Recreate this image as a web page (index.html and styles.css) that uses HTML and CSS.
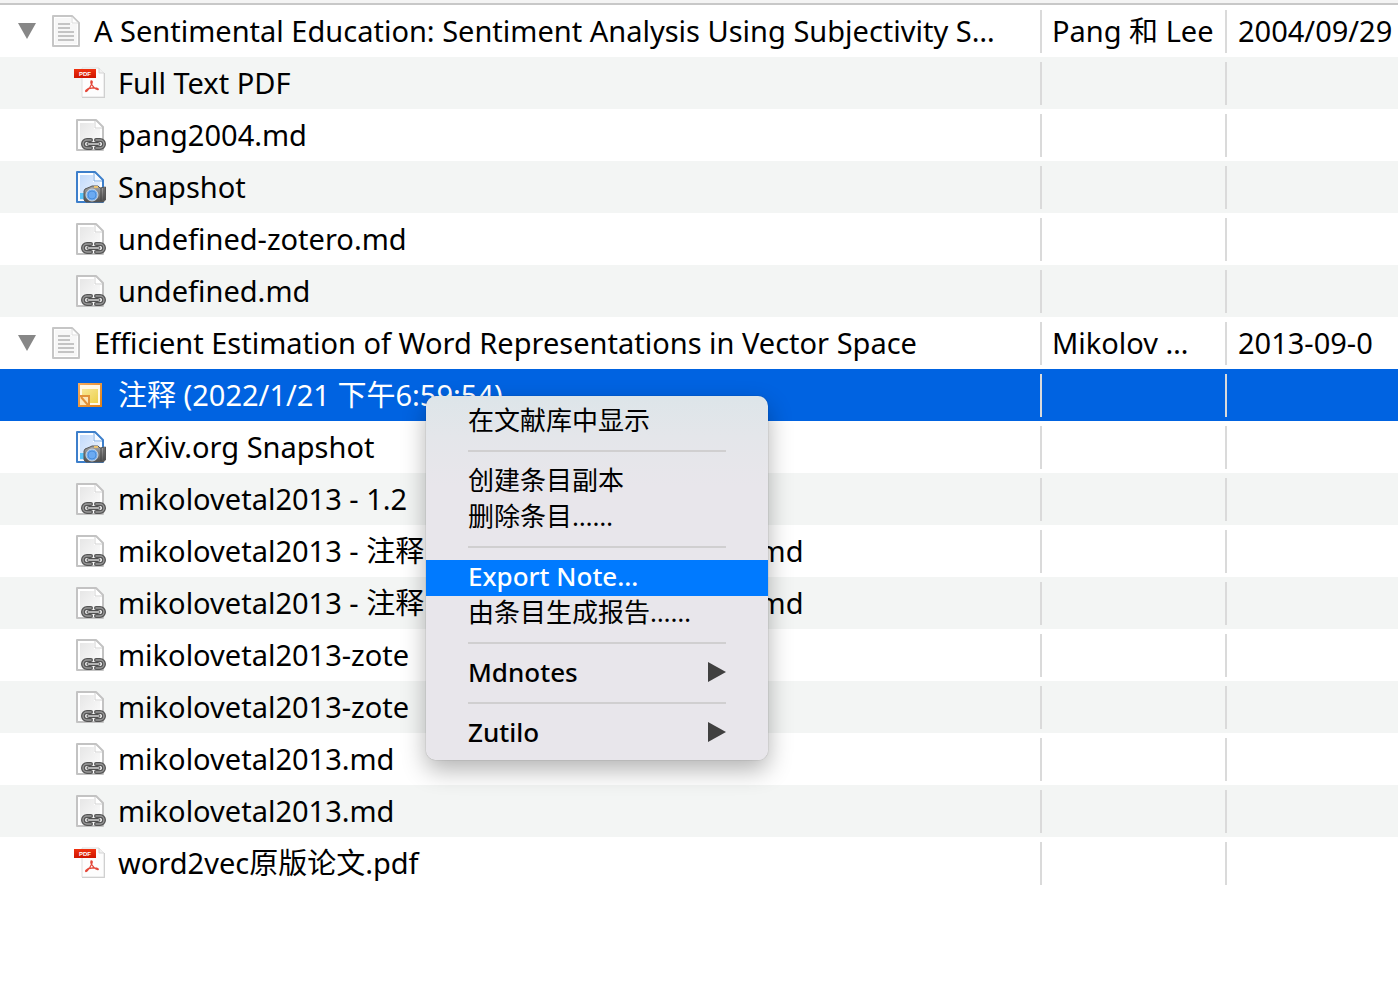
FILE: index.html
```html
<!DOCTYPE html>
<html lang="zh-CN">
<head>
<meta charset="utf-8">
<title>Zotero</title>
<link rel="stylesheet" href="styles.css">
</head>
<body>
<svg class="defs" aria-hidden="true">
  <defs>
    <linearGradient id="paper" x1="0" y1="0" x2="1" y2="1"><stop offset="0" stop-color="#e6e6e6"/><stop offset="1" stop-color="#fdfdfd"/></linearGradient>
    <linearGradient id="blue" x1="0" y1="0" x2="1" y2="1"><stop offset="0" stop-color="#c3dafa"/><stop offset="1" stop-color="#f0f6ff"/></linearGradient>
    <linearGradient id="red" x1="0" y1="0" x2="0" y2="1"><stop offset="0" stop-color="#f0310f"/><stop offset="1" stop-color="#cf1500"/></linearGradient>
    <linearGradient id="orange" x1="0" y1="0" x2="1" y2="1"><stop offset="0" stop-color="#f3a95c"/><stop offset="1" stop-color="#e08218"/></linearGradient>
    <linearGradient id="yellow" x1="0" y1="0" x2="1" y2="1"><stop offset="0" stop-color="#f9e796"/><stop offset="1" stop-color="#ecd04a"/></linearGradient>
    <linearGradient id="metal" x1="0" y1="0" x2="0" y2="1"><stop offset="0" stop-color="#a6a6a6"/><stop offset="1" stop-color="#4e4e4e"/></linearGradient>
    <symbol id="doc" viewBox="0 0 28 32">
      <path d="M1 1H20L27 8V31H1Z" fill="#fff" stroke="#c6c6c6" stroke-width="2" stroke-linejoin="round"/>
      <path d="M3 3H19V9H25V29H3Z" fill="#f7f7f7"/>
      <path d="M20 2V8H26" fill="#fff" stroke="#dcdcdc"/>
      <path d="M6 9H18M6 13H18M6 17H22M6 21H22M6 25H22" stroke="#c4c4c4" stroke-width="2"/>
    </symbol>
    <symbol id="link" viewBox="-2 0 32 32">
      <path d="M1 1H20L27 8V31H1Z" fill="#fff" stroke="#c3c3c3" stroke-width="2" stroke-linejoin="round"/>
      <path d="M4 4H18V10H24V29H4Z" fill="url(#paper)"/>
      <path d="M19 2V9H26" fill="#fff" stroke="#d2d2d2"/>
      <path d="M15 21H11A4 4 0 0 0 11 29H15M20 21H24A4 4 0 0 1 24 29H20" fill="none" stroke="#555" stroke-width="4" stroke-linecap="round"/>
      <path d="M15 21H11A4 4 0 0 0 11 29H15M20 21H24A4 4 0 0 1 24 29H20" fill="none" stroke="#999" stroke-width="1.4" stroke-linecap="round"/>
      <rect x="11" y="23.5" width="13" height="3" rx="1.5" fill="#b4b4b4" stroke="#505050"/>
    </symbol>
    <symbol id="snap" viewBox="-2 0 32 32">
      <path d="M1 1H19L27 9V31H1Z" fill="#fff" stroke="#3d7fcb" stroke-width="2" stroke-linejoin="round"/>
      <path d="M4 4H17V11H24V29H4Z" fill="url(#blue)"/>
      <path d="M18 2V10H26" fill="#f7faff" stroke="#79a9e2"/>
      <path d="M4 22H9V28H4Z" fill="#58c4fa"/>
      <path d="M9 18L14 16L16 15H22L24 17L29.500 16V29L27 31H10L8 29V20Z" fill="url(#metal)" stroke="#565656"/>
      <path d="M25 17V30M28 17V29" stroke="#444"/>
      <circle cx="16" cy="24" r="6" fill="#74aef0" stroke="#d0d6dd" stroke-width="1"/>
      <circle cx="16" cy="24" r="4" fill="#6baaf2" stroke="#4b8edb"/>
      <rect x="18" y="15" width="4" height="2" fill="#eac06c"/>
    </symbol>
    <symbol id="pdf" viewBox="0 0 32 32">
      <path d="M8 30.500H30.500V6" fill="none" stroke="#c3c3c3"/>
      <path d="M8 1H25L30 6V30H8Z" fill="#fdfdfd" stroke="#dedede"/>
      <path d="M25 1V6H30" fill="#f1f1f1" stroke="#d5d5d5"/>
      <rect y="2" width="22" height="9" fill="url(#red)"/>
      <text x="5" y="9" font-family="Liberation Sans" font-size="6" font-weight="700" fill="#fff">PDF</text>
      <path d="M17 14C20 13 17 20 13 24C10 26 12 21 18 21C25 20 26 24 22 22C19 20 16 16 17 14Z" fill="none" stroke="#e44638" stroke-width="1.3"/>
    </symbol>
    <symbol id="note" viewBox="0 0 24 24">
      <rect x="1" y="1" width="22" height="22" fill="#fff9e6" stroke="url(#orange)" stroke-width="2"/>
      <rect x="4" y="6" width="16" height="14" fill="url(#yellow)"/>
      <path d="M2 13H11V22H2Z" fill="#fbe7bd"/>
      <path d="M2 13H11V22M3 14L10 22" fill="none" stroke="#e0913a" stroke-width="2"/>
    </symbol>
  </defs>
</svg>
<main class="library">
  <table class="items">
    <colgroup><col><col class="col-creator"><col class="col-date"></colgroup>
    <tbody>
      <tr><td><div class="name"><button class="twisty" aria-label="折叠"></button><svg class="icon-doc"><use href="#doc"/></svg><span>A Sentimental Education: Sentiment Analysis Using Subjectivity S…</span></div></td><td>Pang 和 Lee</td><td>2004/09/29</td></tr>
      <tr><td><div class="name child"><svg class="icon"><use href="#pdf"/></svg><span>Full Text PDF</span></div></td><td></td><td></td></tr>
      <tr><td><div class="name child"><svg class="icon"><use href="#link"/></svg><span>pang2004.md</span></div></td><td></td><td></td></tr>
      <tr><td><div class="name child"><svg class="icon"><use href="#snap"/></svg><span>Snapshot</span></div></td><td></td><td></td></tr>
      <tr><td><div class="name child"><svg class="icon"><use href="#link"/></svg><span>undefined-zotero.md</span></div></td><td></td><td></td></tr>
      <tr><td><div class="name child"><svg class="icon"><use href="#link"/></svg><span>undefined.md</span></div></td><td></td><td></td></tr>
      <tr><td><div class="name"><button class="twisty" aria-label="折叠"></button><svg class="icon-doc"><use href="#doc"/></svg><span>Efficient Estimation of Word Representations in Vector Space</span></div></td><td>Mikolov …</td><td>2013-09-0</td></tr>
      <tr class="selected"><td><div class="name child"><svg class="icon note"><use href="#note"/></svg><span>注释 (2022/1/21 下午6:59:54)</span></div></td><td></td><td></td></tr>
      <tr><td><div class="name child"><svg class="icon"><use href="#snap"/></svg><span>arXiv.org Snapshot</span></div></td><td></td><td></td></tr>
      <tr><td><div class="name child"><svg class="icon"><use href="#link"/></svg><span>mikolovetal2013 - 1.2</span></div></td><td></td><td></td></tr>
      <tr><td><div class="name child"><svg class="icon"><use href="#link"/></svg><span>mikolovetal2013 - 注释 (2022/1/21 下午6:59:54).md</span></div></td><td></td><td></td></tr>
      <tr><td><div class="name child"><svg class="icon"><use href="#link"/></svg><span>mikolovetal2013 - 注释 (2022/1/21 下午6:59:54).md</span></div></td><td></td><td></td></tr>
      <tr><td><div class="name child"><svg class="icon"><use href="#link"/></svg><span>mikolovetal2013-zote</span></div></td><td></td><td></td></tr>
      <tr><td><div class="name child"><svg class="icon"><use href="#link"/></svg><span>mikolovetal2013-zote</span></div></td><td></td><td></td></tr>
      <tr><td><div class="name child"><svg class="icon"><use href="#link"/></svg><span>mikolovetal2013.md</span></div></td><td></td><td></td></tr>
      <tr><td><div class="name child"><svg class="icon"><use href="#link"/></svg><span>mikolovetal2013.md</span></div></td><td></td><td></td></tr>
      <tr><td><div class="name child"><svg class="icon"><use href="#pdf"/></svg><span>word2vec原版论文.pdf</span></div></td><td></td><td></td></tr>
    </tbody>
  </table>
  <div class="menu" role="menu">
    <button role="menuitem">在文献库中显示</button>
    <hr>
    <button role="menuitem">创建条目副本</button>
    <button role="menuitem">删除条目……</button>
    <hr>
    <button role="menuitem" class="latin active">Export Note…</button>
    <button role="menuitem">由条目生成报告……</button>
    <hr>
    <button role="menuitem" class="latin submenu">Mdnotes</button>
    <hr>
    <button role="menuitem" class="latin submenu">Zutilo</button>
  </div>
</main>
</body>
</html>
```
FILE: styles.css
```css
* { box-sizing: border-box; }

body {
  margin: 0;
  background: #fff;
  color: #000;
  font: 29px/36px "Noto Sans", "Noto Sans CJK SC", sans-serif;
}

.defs { position: absolute; width: 0; height: 0; }

.library {
  position: relative;
  min-height: 100vh;
  overflow: hidden;
  border-top: 3px solid #f4f4f4;
}

.items {
  width: 100%;
  table-layout: fixed;
  border-collapse: separate;
  border-spacing: 0;
  border-top: 2px solid #c8c8c8;
}

.col-creator { width: 185px; }
.col-date { width: 171px; }

.items tr { height: 52px; }
.items tr:nth-child(even) { background: #f3f5f4; }
.items tr.selected { background: #0063e1; color: #fff; }

.items td {
  padding: 0 0 0 10px;
  overflow: hidden;
  white-space: nowrap;
}

.items td:not(:last-child) {
  background: linear-gradient(#dadada, #dadada) right 5px / 2px 43px no-repeat;
}

.items td:last-child { padding-left: 11px; }
.items td:first-child { padding-left: 18px; }

.name { display: flex; align-items: center; }
.name.child { padding-left: 56px; }

.twisty {
  width: 18px;
  height: 16px;
  margin-right: 16px;
  padding: 0;
  border: 0;
  background: #878787;
  clip-path: polygon(0 0, 100% 0, 50% 100%);
}

.icon-doc { width: 28px; height: 32px; margin-right: 14px; }
.icon { width: 32px; height: 32px; margin-right: 12px; }
.icon.note { height: 24px; }

.menu {
  position: absolute;
  top: 393px;
  left: 426px;
  width: 342px;
  padding: 8px 0;
  border-radius: 10px;
  background: linear-gradient(#dde5e9, #e4e6ea 40px, #e8e6eb 90px);
  box-shadow: 0 0 1px rgba(0, 0, 0, .5), 0 10px 24px rgba(0, 0, 0, .3);
}

.menu button {
  display: flex;
  align-items: center;
  justify-content: space-between;
  width: 100%;
  height: 36px;
  padding: 0 42px 4px;
  border: 0;
  background: none;
  color: #000;
  font: 400 26px/32px "Noto Sans", "Noto Sans CJK SC", sans-serif;
  text-align: left;
}

.menu button.latin { font-weight: 500; }
.menu button.active { background: #007aff; color: #fff; }

.submenu::after {
  content: "";
  width: 18px;
  height: 20px;
  background: #404040;
  clip-path: polygon(0 0, 100% 50%, 0 100%);
}

.menu hr {
  height: 2px;
  margin: 10px 42px 12px;
  border: 0;
  background: #d0cfd0;
}
```
